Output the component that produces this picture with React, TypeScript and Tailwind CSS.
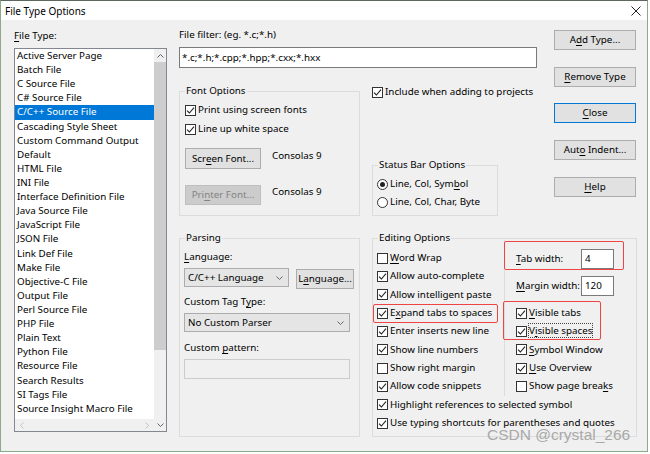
import React from 'react';

const U = ({ children }: { children: React.ReactNode }) => (
  <span className="underline underline-offset-[1.5px]">{children}</span>
);

const fileTypes = [
  'Active Server Page',
  'Batch File',
  'C Source File',
  'C# Source File',
  'C/C++ Source File',
  'Cascading Style Sheet',
  'Custom Command Output',
  'Default',
  'HTML File',
  'INI File',
  'Interface Definition File',
  'Java Source File',
  'JavaScript File',
  'JSON File',
  'Link Def File',
  'Make File',
  'Objective-C File',
  'Output File',
  'Perl Source File',
  'PHP File',
  'Plain Text',
  'Python File',
  'Resource File',
  'Search Results',
  'SI Tags File',
  'Source Insight Macro File',
];

function Box({ checked }: { checked: boolean }) {
  return (
    <span className="flex h-[11px] w-[11px] shrink-0 items-center justify-center border border-[#333] bg-white">
      {checked && (
        <svg width="9" height="9" viewBox="0 0 9 9">
          <path d="M1 4.6 L3.4 7 L8 1.6" fill="none" stroke="#222" strokeWidth="1.1" />
        </svg>
      )}
    </span>
  );
}

function Check({
  checked = true,
  children,
  className = '',
}: {
  checked?: boolean;
  children: React.ReactNode;
  className?: string;
}) {
  return (
    <div className={`flex h-[18.33px] items-center gap-[2px] whitespace-nowrap ${className}`}>
      <Box checked={checked} />
      <span>{children}</span>
    </div>
  );
}

function Radio({ on, children }: { on: boolean; children: React.ReactNode }) {
  return (
    <div className="flex h-[14px] items-center gap-[2px] whitespace-nowrap">
      <span className="flex h-[11px] w-[11px] items-center justify-center rounded-full border border-[#333] bg-white">
        {on && <span className="h-[5px] w-[5px] rounded-full bg-[#222]" />}
      </span>
      <span>{children}</span>
    </div>
  );
}

function Btn({
  children,
  className = '',
  disabled = false,
  primary = false,
}: {
  children: React.ReactNode;
  className?: string;
  disabled?: boolean;
  primary?: boolean;
}) {
  const border = primary ? 'border-[#0078d7]' : disabled ? 'border-[#bfbfbf]' : 'border-[#adadad]';
  const fill = disabled ? 'bg-[#cccccc] text-[#838383]' : 'bg-[#e1e1e1]';
  return (
    <div className={`flex shrink-0 items-center justify-center whitespace-nowrap border ${border} ${fill} ${className}`}>
      <span>{children}</span>
    </div>
  );
}

function Group({
  label,
  className = '',
  children,
}: {
  label: string;
  className?: string;
  children: React.ReactNode;
}) {
  return (
    <div className={`relative shrink-0 border border-[#dcdcdc] ${className}`}>
      <span className="absolute -top-[8px] left-[5px] bg-[#f0f0f0] px-[1px] leading-[14px] whitespace-nowrap">
        {label}
      </span>
      {children}
    </div>
  );
}

function Chevron() {
  return (
    <svg width="7" height="4" viewBox="0 0 7 4">
      <path d="M0.5 0.5 L3.5 3.5 L6.5 0.5" fill="none" stroke="#666" strokeWidth="1" />
    </svg>
  );
}

function Select({ value, className = '' }: { value: string; className?: string }) {
  return (
    <div
      className={`flex shrink-0 items-center justify-between border border-[#acacac] bg-[#e5e5e5] pl-[3px] pr-[5px] ${className}`}
    >
      <span>{value}</span>
      <Chevron />
    </div>
  );
}

export default function App() {
  return (
    <div className="relative h-[454px] w-[650px] overflow-hidden bg-white font-['Noto_Sans','Liberation_Sans',sans-serif] text-[9.8px] leading-[14px] text-black">
      <div className="flex h-[452px] w-[648px] flex-col border border-[#8aab8a] border-t-[#5d675d]">
        {/* title bar */}
        <div className="flex h-[19px] shrink-0 items-center justify-between bg-white pl-[4px] pr-[6px]">
          <span className="text-[10px]">File Type Options</span>
          <svg width="10" height="10" viewBox="0 0 10 10">
            <path d="M0.5 0.5 L9.5 9.5 M9.5 0.5 L0.5 9.5" stroke="#222" strokeWidth="1" />
          </svg>
        </div>

        {/* body */}
        <div className="flex flex-1 bg-[#f0f0f0]">
          {/* file type list */}
          <div className="ml-[13px] w-[153px] shrink-0 pt-[9px]">
            <div>
              <U>F</U>ile Type:
            </div>
            <div className="mt-[5px] flex h-[384px] border border-[#828790] bg-white">
              <div className="flex w-[139px] flex-col">
                {fileTypes.map((t) => (
                  <div
                    key={t}
                    className={`h-[14.12px] whitespace-nowrap pl-[2px] leading-[14.12px] ${
                      t === 'C/C++ Source File' ? 'bg-[#0078d7] text-white' : ''
                    }`}
                  >
                    {t}
                  </div>
                ))}
                <div className="flex-1" />
                <div className="flex h-[12px] items-center justify-between bg-[#f0f0f0] px-[5px]">
                  <svg width="4" height="7" viewBox="0 0 4 7">
                    <path d="M3.5 0.5 L0.5 3.5 L3.5 6.5" fill="none" stroke="#c2c2c2" strokeWidth="1" />
                  </svg>
                  <svg width="4" height="7" viewBox="0 0 4 7">
                    <path d="M0.5 0.5 L3.5 3.5 L0.5 6.5" fill="none" stroke="#c2c2c2" strokeWidth="1" />
                  </svg>
                </div>
              </div>
              <div className="flex w-[12px] flex-col bg-[#f0f0f0]">
                <div className="flex h-[13px] items-center justify-center">
                  <svg width="7" height="4" viewBox="0 0 7 4">
                    <path d="M0.5 3.5 L3.5 0.5 L6.5 3.5" fill="none" stroke="#606060" strokeWidth="1" />
                  </svg>
                </div>
                <div className="h-[288px] bg-[#cdcdcd]" />
                <div className="flex-1" />
                <div className="flex h-[13px] items-center justify-center">
                  <Chevron />
                </div>
              </div>
            </div>
          </div>

          {/* right area */}
          <div className="ml-[12px] flex flex-col">
            <div className="flex">
              <div className="w-[358px] pt-[8px]">
                <div>File filter: (eg. *.c;*.h)</div>
                <div className="mt-[5px] flex h-[21px] items-center border border-[#7a7a7a] bg-white pl-[2px]">
                  *.c;*.h;*.cpp;*.hpp;*.cxx;*.hxx
                </div>
                <div className="mt-[17px] flex items-start">
                  <Group label="Font Options" className="mt-[6px] h-[125px] w-[181px]">
                    <div className="pl-[5px] pt-[11px]">
                      <Check className="!h-[14px]">Print using screen fonts</Check>
                      <Check className="mt-[5px] !h-[14px]">Line up white space</Check>
                      <div className="mt-[12px] flex items-start">
                        <Btn className="h-[21px] w-[76px]">
                          Scr<U>e</U>en Font...
                        </Btn>
                        <span className="ml-[11px] mt-[1px]">Consolas 9</span>
                      </div>
                      <div className="mt-[16px] flex items-start">
                        <Btn disabled className="h-[20px] w-[76px]">
                          Pri<U>n</U>ter Font...
                        </Btn>
                        <span className="ml-[11px]">Consolas 9</span>
                      </div>
                    </div>
                  </Group>
                  <div className="ml-[12px]">
                    <Check className="!h-[14px]">Include when adding to projects</Check>
                    <Group label="Status Bar Options" className="mt-[66px] h-[51px] w-[126px]">
                      <div className="pl-[4px] pt-[11px]">
                        <Radio on>
                          Line, Col, Sym<U>b</U>ol
                        </Radio>
                        <div className="mt-[4px]">
                          <Radio on={false}>Line, Col, Char, Byte</Radio>
                        </div>
                      </div>
                    </Group>
                  </div>
                </div>
              </div>

              {/* buttons */}
              <div className="ml-[17px] flex w-[82px] flex-col pt-[10px]">
                <Btn className="h-[20px]">
                  A<U>d</U>d Type...
                </Btn>
                <Btn className="mt-[17px] h-[20px]">
                  <U>R</U>emove Type
                </Btn>
                <Btn primary className="mt-[16px] h-[20px]">
                  <U>C</U>lose
                </Btn>
                <Btn className="mt-[17px] h-[20px]">
                  Aut<U>o</U> Indent...
                </Btn>
                <Btn className="mt-[17px] h-[20px]">
                  <U>H</U>elp
                </Btn>
              </div>
            </div>

            {/* bottom groups */}
            <div className="mt-[22px] flex">
              <Group label="Parsing" className="h-[199px] w-[181px]">
                <div className="pl-[4px] pt-[11px]">
                  <div>
                    <U>L</U>anguage:
                  </div>
                  <div className="mt-[4px] flex items-start">
                    <Select value="C/C++ Language" className="h-[19px] w-[105px]" />
                    <Btn className="ml-[7px] mt-[1px] h-[20px] w-[58px]">
                      L<U>a</U>nguage...
                    </Btn>
                  </div>
                  <div className="mt-[6px]">
                    Custom Tag T<U>y</U>pe:
                  </div>
                  <Select value="No Custom Parser" className="mt-[4px] h-[19px] w-[166px]" />
                  <div className="mt-[9px]">
                    Custom <U>p</U>attern:
                  </div>
                  <div className="mt-[4px] h-[20px] w-[166px] border border-[#cccccc] bg-[#f0f0f0]" />
                </div>
              </Group>

              <Group label="Editing Options" className="ml-[12px] h-[199px] w-[265px]">
                <div className="flex">
                  <div className="w-[131px] pl-[4px] pt-[10px]">
                    <Check checked={false}>
                      <U>W</U>ord Wrap
                    </Check>
                    <Check>Allow auto-complete</Check>
                    <Check>Allow intelligent paste</Check>
                    <Check>
                      E<U>x</U>pand tabs to spaces
                    </Check>
                    <Check>Enter inserts new line</Check>
                    <Check>Show line numbers</Check>
                    <Check checked={false}>Show right margin</Check>
                    <Check>Allow code snippets</Check>
                  </div>
                  <div className="mt-[1px] border-l border-[#dcdcdc] pl-[11px] pt-[9px]">
                    <div className="flex h-[20px] w-[98px] items-center justify-between whitespace-nowrap">
                      <span>
                        <U>T</U>ab width:
                      </span>
                      <div className="flex h-[20px] w-[33px] shrink-0 items-center border border-[#7a7a7a] bg-white pl-[3px]">
                        4
                      </div>
                    </div>
                    <div className="mt-[7px] flex h-[20px] w-[98px] items-center justify-between whitespace-nowrap">
                      <span>
                        <U>M</U>argin width:
                      </span>
                      <div className="flex h-[20px] w-[33px] shrink-0 items-center border border-[#7a7a7a] bg-white pl-[3px]">
                        120
                      </div>
                    </div>
                    <div className="mt-[8px]">
                      <Check>
                        <U>V</U>isible tabs
                      </Check>
                      <Check>
                        <span className="outline-1 outline-dotted outline-[#444]">
                          V<U>i</U>sible spaces
                        </span>
                      </Check>
                      <Check>
                        <U>S</U>ymbol Window
                      </Check>
                      <Check>
                        <U>U</U>se Overview
                      </Check>
                      <Check checked={false}>
                        Show page brea<U>k</U>s
                      </Check>
                    </div>
                  </div>
                </div>
                <div className="pl-[4px]">
                  <Check>Highlight references to selected symbol</Check>
                  <Check>Use typing shortcuts for parentheses and quotes</Check>
                </div>
              </Group>
            </div>
          </div>
        </div>
      </div>

      {/* red annotation boxes */}
      <div className="absolute left-[504px] top-[241px] h-[29px] w-[120px] rounded-[2px] border border-[#ee4444]" />
      <div className="absolute left-[373px] top-[304px] h-[19px] w-[125px] rounded-[2px] border border-[#ee4444]" />
      <div className="absolute left-[503px] top-[301px] h-[39px] w-[98px] rounded-[2px] border border-[#ee4444]" />

      {/* watermark */}
      <div className="absolute left-[487px] top-[426px] font-['Liberation_Sans',sans-serif] text-[15.5px] leading-[18px] text-[#a9a9a9]">
        CSDN @crystal_266
      </div>
    </div>
  );
}
